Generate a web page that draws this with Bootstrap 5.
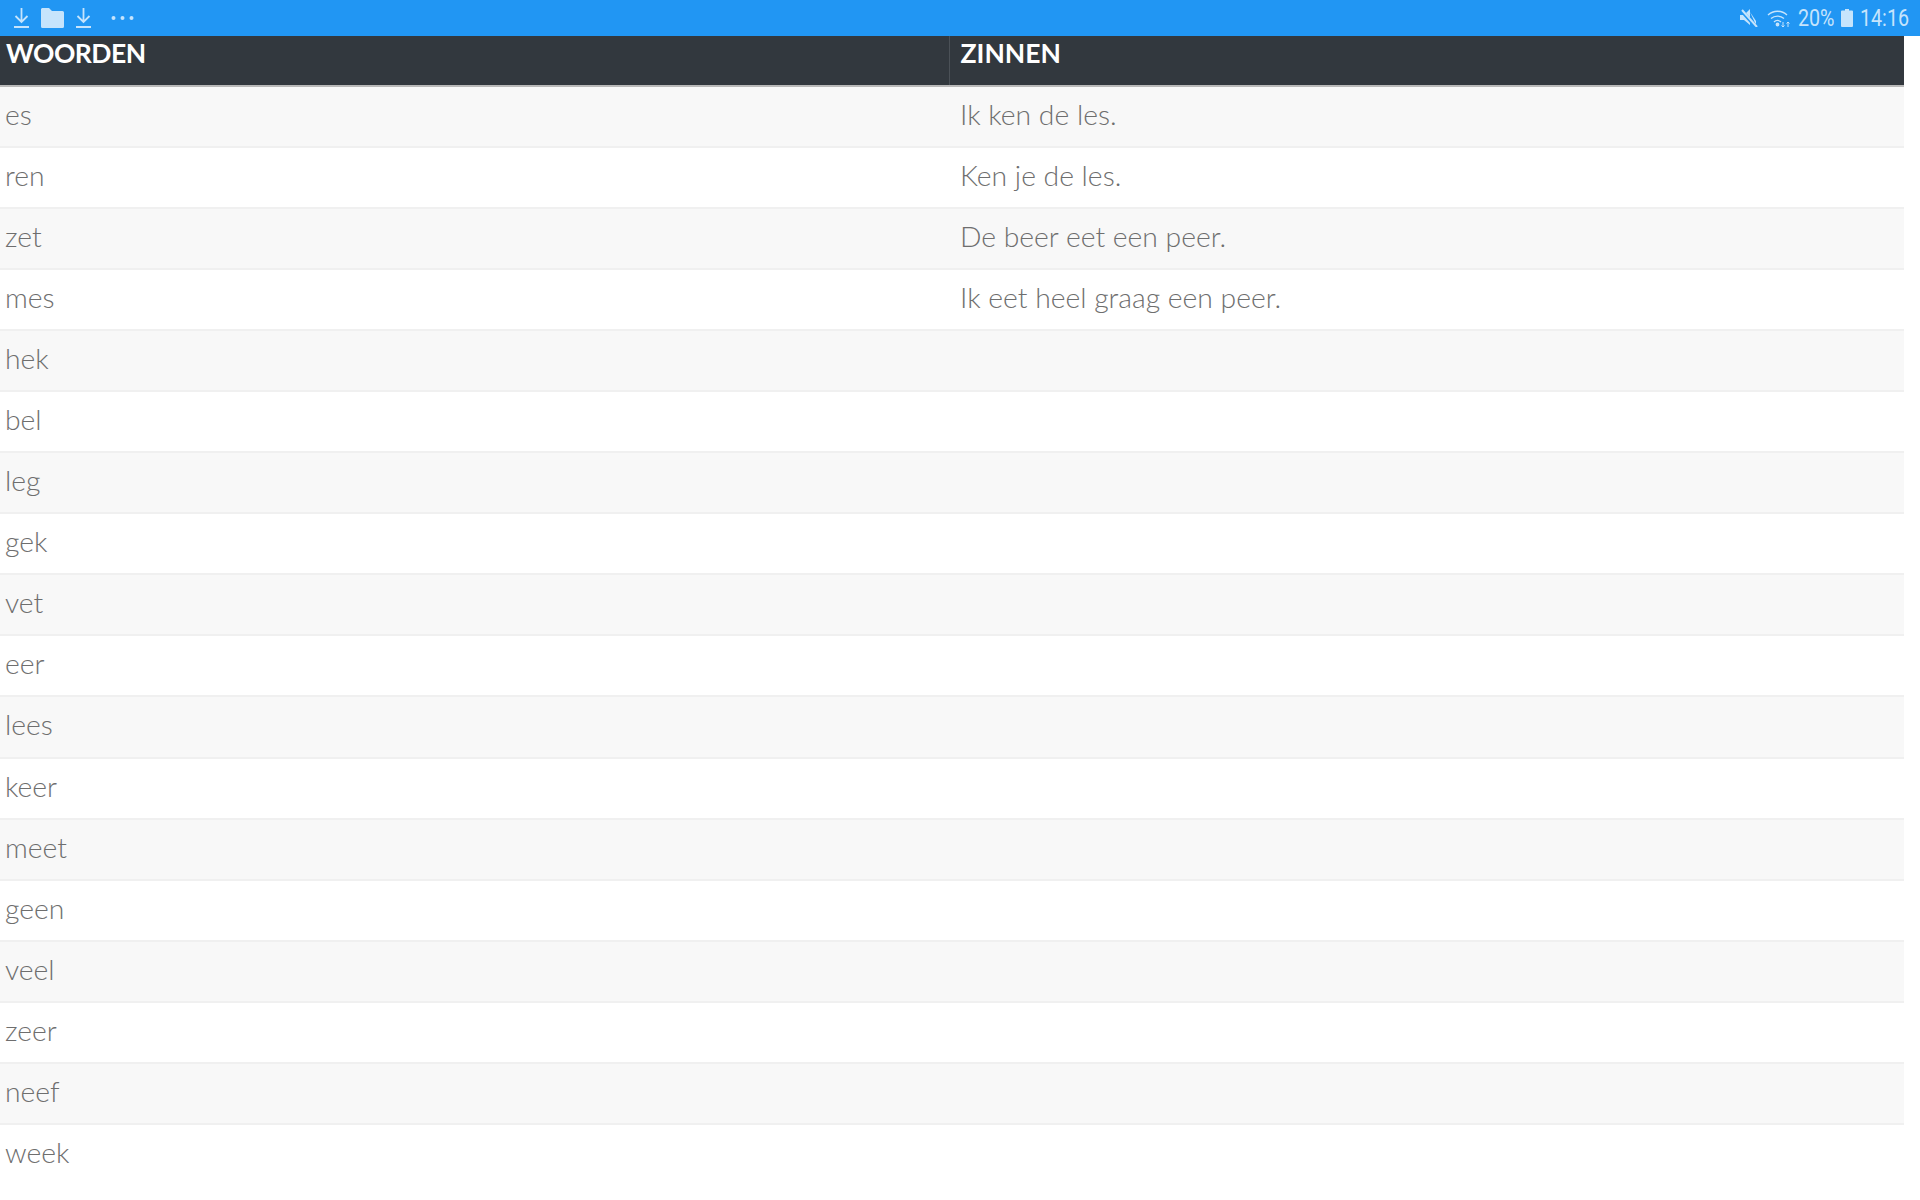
<!DOCTYPE html>
<html lang="nl">
<head>
<meta charset="utf-8">
<title>Woorden</title>
<link href="https://cdn.jsdelivr.net/npm/bootstrap@5.3.0/dist/css/bootstrap.min.css" rel="stylesheet">
<style>
html,body{height:1200px;overflow:hidden;background:#fff}
body{font-family:"Lato","Open Sans",sans-serif}
.sbar{height:36px;background:#2196f3;color:#c6e4fc;font-family:Roboto,sans-serif;font-size:24px;padding:0 14px}
.sbar-l{gap:12px}
.sbar-r{gap:7px}
.sbar-r span{display:block;line-height:36px;white-space:nowrap;transform:scaleX(.82);transform-origin:left center}
.sbar-r .t20{width:36px}
.sbar-r .t14{width:46px}
.mute-gap{margin-right:2px}
.wtable{width:1904px;table-layout:fixed;margin:0;color:#6e6e6e;font-size:28.3px;font-weight:300;border-collapse:collapse}
.wtable th,.wtable td{padding:0 5px;vertical-align:top;border:0;box-shadow:none}
.wtable thead th{height:50px;background:#32383e;color:#fff;font-weight:700;font-size:26.5px;line-height:34px;border-bottom:2px solid #b9b9b9;padding-left:6px}
.wtable thead .hw{letter-spacing:-.5px}
.wtable thead th+th{border-left:1px solid #4b5157;padding-left:11px}
.wtable tbody td{height:61.06px;line-height:34px;padding-top:10px;border-top:2px solid #f0f0f0;background:#fff;color:#6e6e6e}
.wtable tbody tr:first-child td{border-top:0;padding-top:10px}
.wtable tbody tr:nth-child(odd) td{background:#f8f8f8}
.wtable tbody td+td{padding-left:11px}
</style>
</head>
<body>
<div class="sbar d-flex align-items-center justify-content-between">
  <div class="sbar-l d-flex align-items-center">
    <svg width="15" height="20" viewBox="0 0 15 20" fill="none" stroke="#c6e4fc" stroke-width="1.800"><path d="M7.500 0v14M1.500 8l6 6 6-6M0 19h15"/></svg>
    <svg width="23" height="20" viewBox="0 0 23 20" fill="#c6e4fc"><path d="M1 0h7l3 3h10.500a1.500 1.500 0 0 1 1.500 1.500V18.500a1.500 1.500 0 0 1-1.500 1.500H1.500A1.500 1.500 0 0 1 0 18.500V1z"/></svg>
    <svg width="15" height="20" viewBox="0 0 15 20" fill="none" stroke="#c6e4fc" stroke-width="1.800"><path d="M7.500 0v14M1.500 8l6 6 6-6M0 19h15"/></svg>
    <svg class="ms-2" width="23" height="6" viewBox="0 0 23 6" fill="#c6e4fc"><circle cx="2.500" cy="3" r="2"/><circle cx="11.500" cy="3" r="2"/><circle cx="20.500" cy="3" r="2"/></svg>
  </div>
  <div class="sbar-r d-flex align-items-center">
    <svg class="mute-gap" width="18" height="18" viewBox="0 0 18 18" fill="#c6e4fc"><path d="M0 6h4l6-6v16l-6-5H0z"/><path d="M10 3l6 9v4z"/><path d="M0 0l16 18" stroke="#2196f3" stroke-width="3.500"/><path d="M2 1l15 17" stroke="#c6e4fc" stroke-width="2"/></svg>
    <svg width="24" height="19" viewBox="0 0 24 19" fill="none" stroke="#c6e4fc" stroke-width="1.400"><path d="M1 6a14 14 0 0 1 19 0M4 9.500a10 10 0 0 1 13 0M7 13a5 5 0 0 1 7 0"/><circle cx="10.500" cy="15.500" r="1.200" fill="#c6e4fc"/><path d="M16 13v5M14.500 16.500l1.500 1.500 1.500-1.500M21 18v-5M19.500 14.500l1.500-1.500 1.500 1.500" stroke-width="1"/></svg>
    <span class="t20">20%</span>
    <svg width="12" height="18" viewBox="0 0 12 18" fill="#c6e4fc"><path d="M4 0h4v1.500h3a1 1 0 0 1 1 1V17a1 1 0 0 1-1 1H1a1 1 0 0 1-1-1V2.500a1 1 0 0 1 1-1h3z"/></svg>
    <span class="t14">14:16</span>
  </div>
</div>
<table class="table wtable">
  <colgroup><col style="width:949px"><col></colgroup>
  <thead><tr><th class="hw">WOORDEN</th><th>ZINNEN</th></tr></thead>
  <tbody>
    <tr><td>es</td><td>Ik ken de les.</td></tr>
    <tr><td>ren</td><td>Ken je de les.</td></tr>
    <tr><td>zet</td><td>De beer eet een peer.</td></tr>
    <tr><td>mes</td><td>Ik eet heel graag een peer.</td></tr>
    <tr><td>hek</td><td></td></tr>
    <tr><td>bel</td><td></td></tr>
    <tr><td>leg</td><td></td></tr>
    <tr><td>gek</td><td></td></tr>
    <tr><td>vet</td><td></td></tr>
    <tr><td>eer</td><td></td></tr>
    <tr><td>lees</td><td></td></tr>
    <tr><td>keer</td><td></td></tr>
    <tr><td>meet</td><td></td></tr>
    <tr><td>geen</td><td></td></tr>
    <tr><td>veel</td><td></td></tr>
    <tr><td>zeer</td><td></td></tr>
    <tr><td>neef</td><td></td></tr>
    <tr><td>week</td><td></td></tr>
  </tbody>
</table>
<script src="https://cdn.jsdelivr.net/npm/bootstrap@5.3.0/dist/js/bootstrap.bundle.min.js"></script>
</body>
</html>
